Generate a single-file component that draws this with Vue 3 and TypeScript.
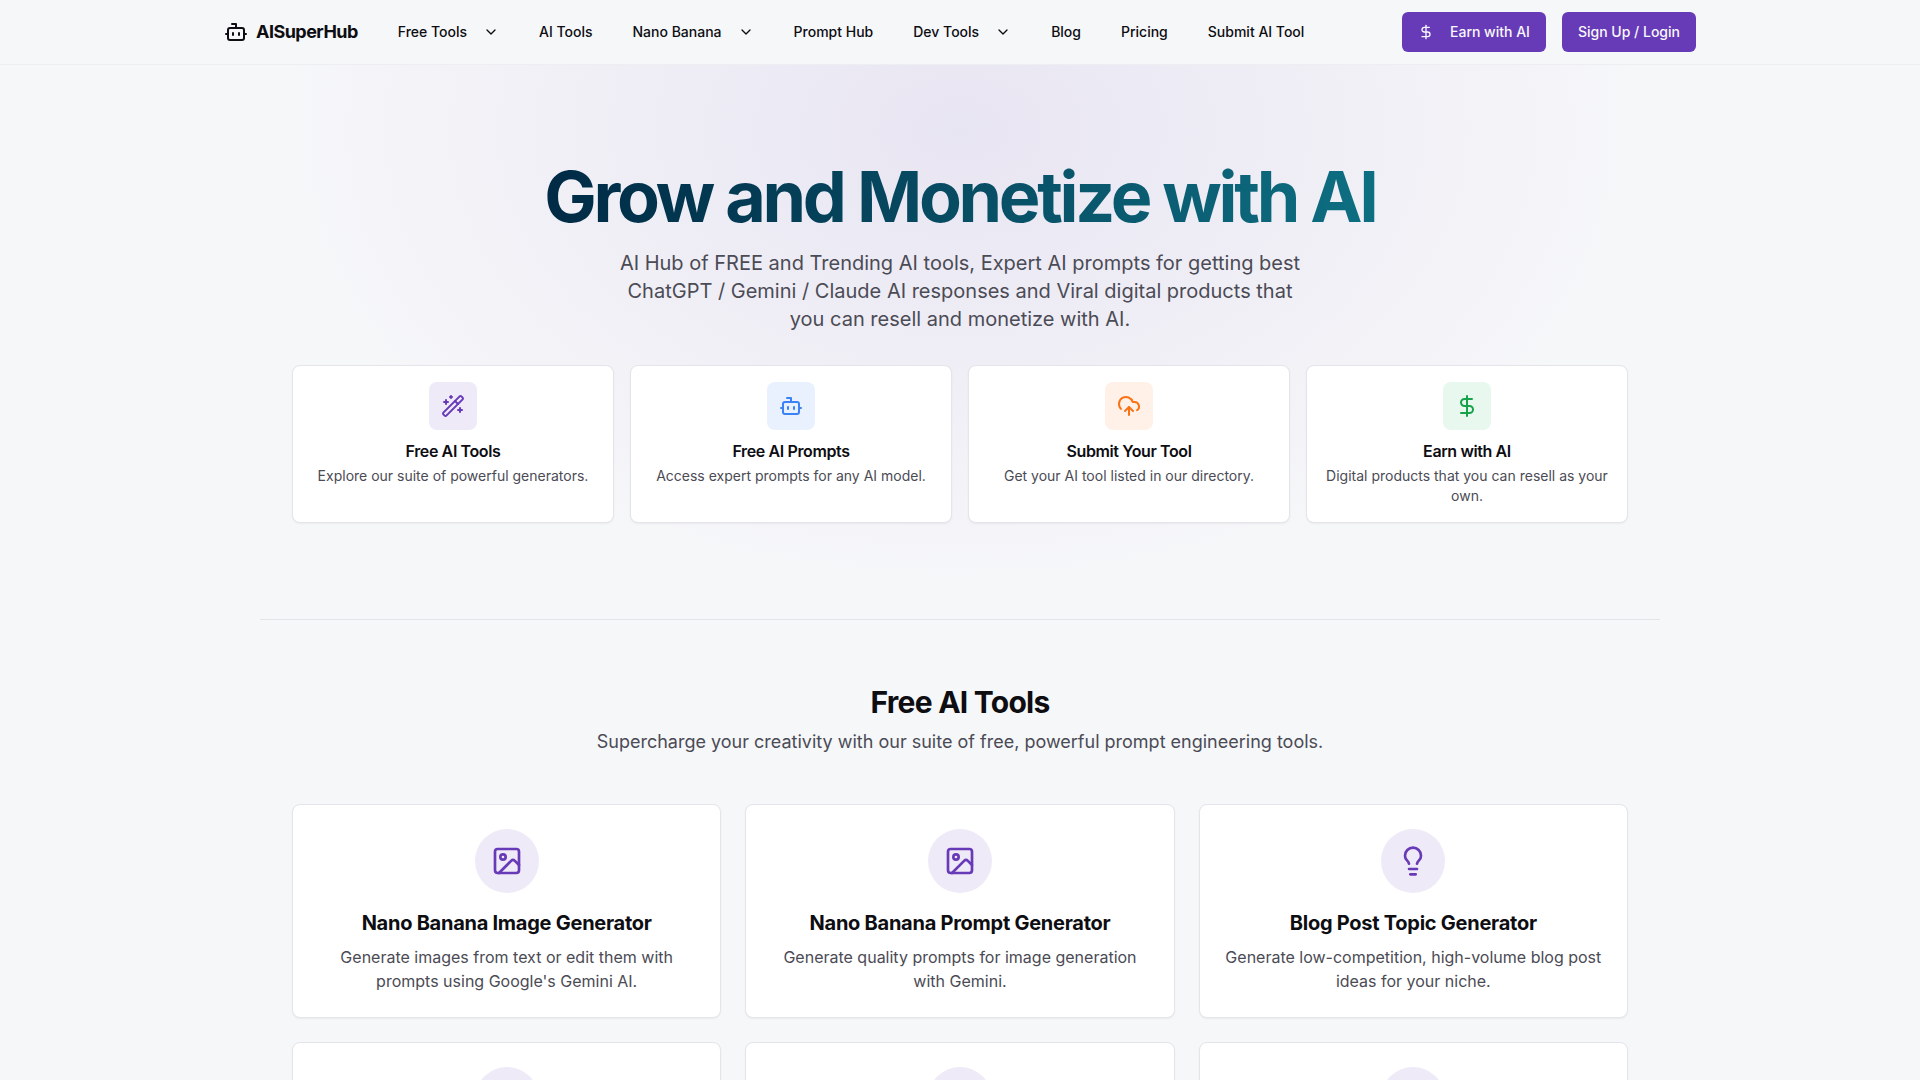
<script setup lang="ts">
import { h } from 'vue'

const paths: Record<string, string[]> = {
  bot: ['M12 8V4H8', 'M6 8h12a2 2 0 0 1 2 2v8a2 2 0 0 1-2 2H6a2 2 0 0 1-2-2v-8a2 2 0 0 1 2-2z', 'M2 14h2', 'M20 14h2', 'M15 13v2', 'M9 13v2'],
  chevron: ['m6 9 6 6 6-6'],
  dollar: ['M12 2v20', 'M17 5H9.5a3.5 3.5 0 0 0 0 7h5a3.5 3.5 0 0 1 0 7H6'],
  wand: [
    'm21.64 3.64-1.28-1.28a1.21 1.21 0 0 0-1.72 0L2.36 18.64a1.21 1.21 0 0 0 0 1.72l1.28 1.28a1.2 1.2 0 0 0 1.72 0L21.64 5.36a1.2 1.2 0 0 0 0-1.72',
    'm14 7 3 3', 'M5 6v4', 'M19 14v4', 'M10 2v2', 'M7 8H3', 'M21 16h-4', 'M11 3H9',
  ],
  cloud: ['M12 13v8', 'M4 14.899A7 7 0 1 1 15.71 8h1.79a4.5 4.5 0 0 1 2.5 8.242', 'm8 17 4-4 4 4'],
  image: ['M5 3h14a2 2 0 0 1 2 2v14a2 2 0 0 1-2 2H5a2 2 0 0 1-2-2V5a2 2 0 0 1 2-2z', 'M7 9a2 2 0 1 0 4 0a2 2 0 1 0-4 0', 'm21 15-3.086-3.086a2 2 0 0 0-2.828 0L6 21'],
  bulb: ['M15 14c.2-1 .7-1.7 1.5-2.5 1-.9 1.5-2.2 1.5-3.5A6 6 0 0 0 6 8c0 1 .2 2.2 1.5 3.5.7.7 1.3 1.5 1.5 2.5', 'M9 18h6', 'M10 22h4'],
}

const Icon = (props: { name: string; size?: number }) =>
  h(
    'svg',
    {
      width: props.size ?? 24,
      height: props.size ?? 24,
      viewBox: '0 0 24 24',
      fill: 'none',
      stroke: 'currentColor',
      'stroke-width': 2,
      'stroke-linecap': 'round',
      'stroke-linejoin': 'round',
    },
    paths[props.name].map((d) => h('path', { d })),
  )

const navItems = [
  { label: 'Free Tools', menu: true },
  { label: 'AI Tools', menu: false },
  { label: 'Nano Banana', menu: true },
  { label: 'Prompt Hub', menu: false },
  { label: 'Dev Tools', menu: true },
  { label: 'Blog', menu: false },
  { label: 'Pricing', menu: false },
  { label: 'Submit AI Tool', menu: false },
]

const features = [
  { title: 'Free AI Tools', text: 'Explore our suite of powerful generators.', icon: 'wand', tone: 'purple' },
  { title: 'Free AI Prompts', text: 'Access expert prompts for any AI model.', icon: 'bot', tone: 'blue' },
  { title: 'Submit Your Tool', text: 'Get your AI tool listed in our directory.', icon: 'cloud', tone: 'orange' },
  { title: 'Earn with AI', text: 'Digital products that you can resell as your own.', icon: 'dollar', tone: 'green' },
]

const tools = [
  { title: 'Nano Banana Image Generator', text: "Generate images from text or edit them with prompts using Google's Gemini AI.", icon: 'image' },
  { title: 'Nano Banana Prompt Generator', text: 'Generate quality prompts for image generation with Gemini.', icon: 'image' },
  { title: 'Blog Post Topic Generator', text: 'Generate low-competition, high-volume blog post ideas for your niche.', icon: 'bulb' },
]
</script>

<template>
  <div class="page">
    <header class="header">
      <div class="header-inner">
        <div class="header-left">
          <a class="logo"><Icon name="bot" /><span>AISuperHub</span></a>
          <nav class="nav">
            <a v-for="item in navItems" :key="item.label" class="nav-item">
              <span>{{ item.label }}</span>
              <Icon v-if="item.menu" name="chevron" :size="16" />
            </a>
          </nav>
        </div>
        <div class="header-actions">
          <button class="btn"><Icon name="dollar" :size="16" /><span>Earn with AI</span></button>
          <button class="btn"><span>Sign Up / Login</span></button>
        </div>
      </div>
    </header>

    <main class="main">
      <section class="hero">
        <h1 class="hero-title">Grow and Monetize with AI</h1>
        <p class="hero-sub">
          AI Hub of FREE and Trending AI tools, Expert AI prompts for getting best ChatGPT / Gemini / Claude AI
          responses and Viral digital products that you can resell and monetize with AI.
        </p>
        <div class="features">
          <div v-for="f in features" :key="f.title" class="feature">
            <div class="feature-icon" :class="f.tone"><Icon :name="f.icon" /></div>
            <h3>{{ f.title }}</h3>
            <p>{{ f.text }}</p>
          </div>
        </div>
      </section>

      <hr class="divider" />

      <section class="tools">
        <h2>Free AI Tools</h2>
        <p class="tools-sub">Supercharge your creativity with our suite of free, powerful prompt engineering tools.</p>
        <div class="tool-grid">
          <div v-for="t in tools" :key="t.title" class="tool">
            <div class="tool-icon"><Icon :name="t.icon" :size="32" /></div>
            <h3>{{ t.title }}</h3>
            <p>{{ t.text }}</p>
          </div>
          <div v-for="n in 3" :key="n" class="tool">
            <div class="tool-icon"></div>
          </div>
        </div>
      </section>
    </main>
  </div>
</template>

<style>
html,
body {
  margin: 0;
  background: #f6f7f9;
}
</style>

<style scoped>
.page {
  height: 100vh;
  overflow: hidden;
  font-family: Inter, 'Liberation Sans', sans-serif;
  color: #0d0d12;
  background: #f6f7f9;
}

.header {
  height: 64px;
  border-bottom: 1px solid #eceef1;
}

.header-inner {
  max-width: 1472px;
  height: 100%;
  margin: 0 auto;
  display: flex;
  align-items: center;
  justify-content: space-between;
}

.header-left {
  display: flex;
  align-items: center;
  gap: 40px;
}

.logo {
  display: flex;
  align-items: center;
  gap: 8px;
  font-size: 18px;
  font-weight: 700;
  letter-spacing: -0.03em;
}

.logo span,
.nav-item span,
.btn span {
  margin-top: -1px;
}

.nav {
  display: flex;
  align-items: center;
  gap: 40px;
}

.nav-item {
  display: flex;
  align-items: center;
  gap: 16px;
  font-size: 14px;
  font-weight: 500;
}

.header-actions {
  display: flex;
  gap: 16px;
}

.btn {
  display: flex;
  align-items: center;
  gap: 16px;
  height: 40px;
  padding: 0 16px;
  border: none;
  border-radius: 6px;
  background: #673ab7;
  color: #f8f8fb;
  font-family: inherit;
  font-size: 14px;
  font-weight: 500;
}

.main {
  background: radial-gradient(ellipse 680px 460px at 50% 65px, #e8e5f2 0%, rgba(232, 229, 242, 0) 100%) no-repeat;
}

.hero {
  max-width: 1336px;
  margin: 0 auto;
  padding-top: 96px;
  text-align: center;
}

.hero-title {
  margin: 0 auto;
  width: fit-content;
  font-size: 70px;
  line-height: 72px;
  font-weight: 700;
  letter-spacing: -0.047em;
  background: linear-gradient(90deg, #002a45, #0e6f82);
  -webkit-background-clip: text;
  background-clip: text;
  color: transparent;
}

.hero-sub {
  max-width: 700px;
  margin: 16px auto 32px;
  font-size: 20px;
  line-height: 28px;
  color: #4b4b55;
}

.features {
  display: grid;
  grid-template-columns: repeat(4, 1fr);
  gap: 16px;
}

.feature {
  padding: 16px;
  background: #fff;
  border: 1px solid #e4e5ea;
  border-radius: 8px;
  box-shadow: 0 1px 2px rgba(0, 0, 0, 0.05);
}

.feature h3 {
  margin: 11px 0 5px;
  font-size: 16px;
  line-height: 20px;
  font-weight: 600;
  letter-spacing: -0.024em;
}

.feature p {
  margin: 0;
  font-size: 14px;
  line-height: 20px;
  color: #4b4b55;
}

.feature-icon {
  width: 48px;
  height: 48px;
  margin: 0 auto;
  display: flex;
  align-items: center;
  justify-content: center;
  border-radius: 8px;
}

.purple {
  background: #efeaf8;
  color: #673ab7;
}

.blue {
  background: #e9f1fe;
  color: #3b82f6;
}

.orange {
  background: #fff1e8;
  color: #f97316;
}

.green {
  background: #e8f8ee;
  color: #16a34a;
}

.divider {
  max-width: 1400px;
  margin: 96px auto 0;
  border: none;
  border-top: 1px solid #e4e5ea;
}

.tools {
  max-width: 1336px;
  margin: 0 auto;
  padding-top: 64px;
  text-align: center;
}

.tools h2 {
  margin: 0 0 8px;
  font-size: 30px;
  line-height: 36px;
  font-weight: 700;
  letter-spacing: -0.025em;
}

.tools-sub {
  margin: 0 0 48px;
  font-size: 18px;
  line-height: 28px;
  color: #4b4b55;
}

.tool-grid {
  display: grid;
  grid-template-columns: repeat(3, 1fr);
  gap: 24px;
}

.tool {
  padding: 24px;
  background: #fff;
  border: 1px solid #e4e5ea;
  border-radius: 8px;
  box-shadow: 0 1px 2px rgba(0, 0, 0, 0.05);
}

.tool-icon {
  width: 64px;
  height: 64px;
  margin: 0 auto 16px;
  display: flex;
  align-items: center;
  justify-content: center;
  border-radius: 50%;
  background: #efeaf8;
  color: #673ab7;
}

.tool h3 {
  margin: 0 0 8px;
  font-size: 20px;
  line-height: 28px;
  font-weight: 700;
  letter-spacing: -0.013em;
}

.tool p {
  margin: 0;
  font-size: 16px;
  line-height: 24px;
  color: #4b4b55;
}
</style>
